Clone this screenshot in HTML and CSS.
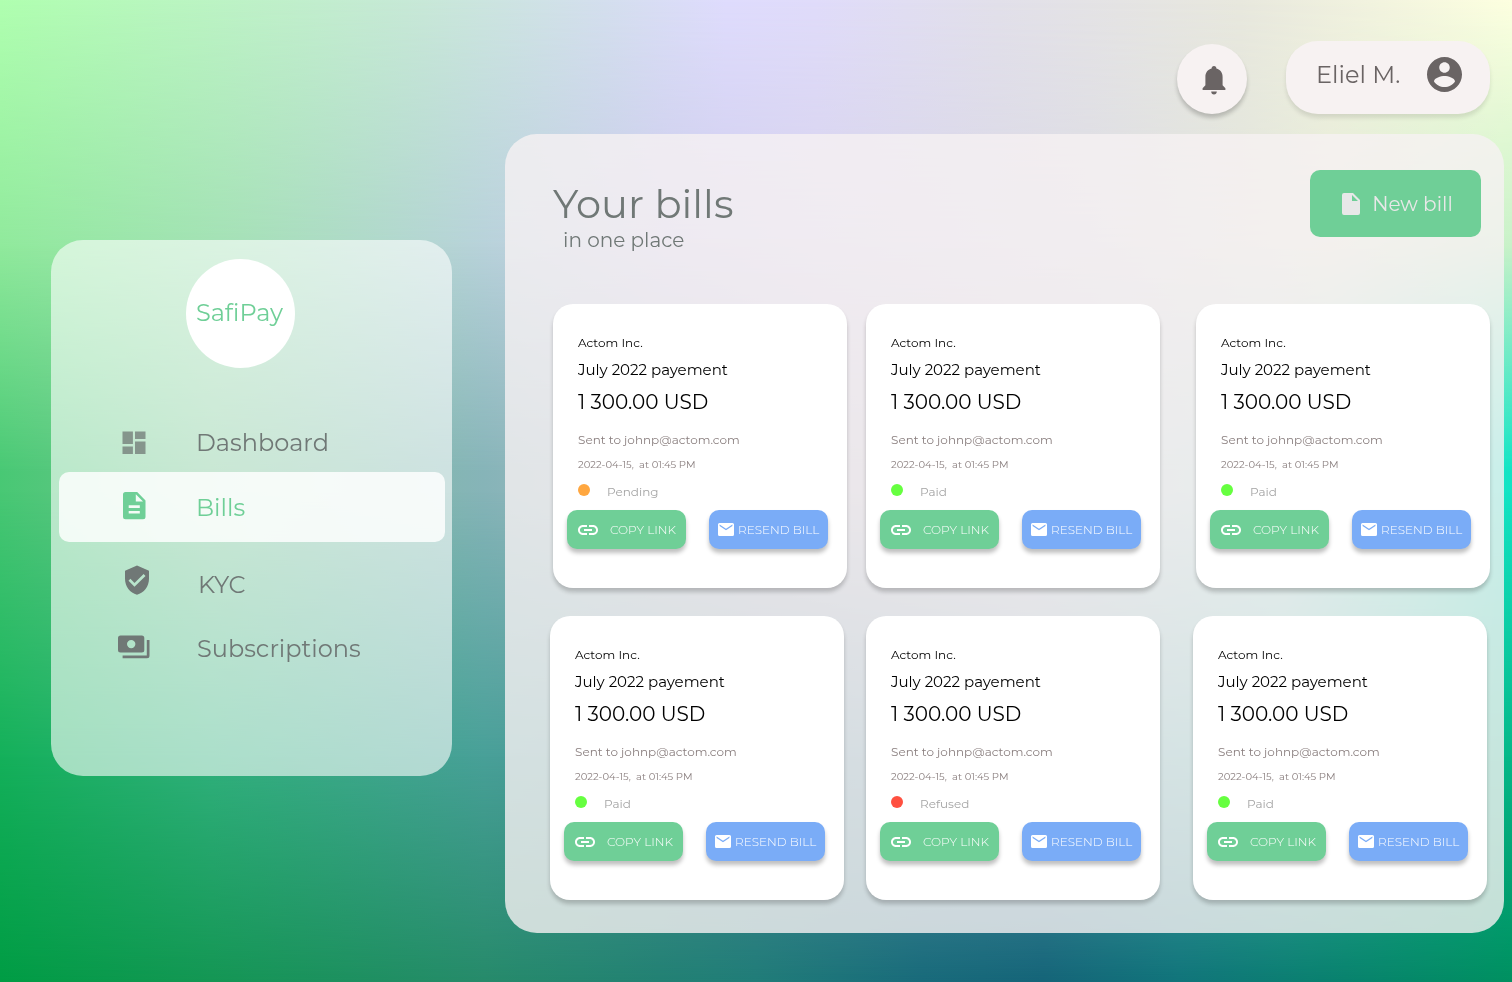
FILE: index.html
```html
<!DOCTYPE html>
<html lang="en">
<head>
<meta charset="utf-8">
<meta name="viewport" content="width=device-width, initial-scale=1">
<title>SafiPay – Bills</title>
<link rel="stylesheet" href="styles.css">
</head>
<body>
<div class="backdrop" aria-hidden="true">
  <div class="wash wash-1"></div>
  <div class="wash wash-2"></div>
  <div class="wash wash-3"></div>
  <div class="wash wash-4"></div>
  <div class="wash wash-5"></div>
</div>

<svg class="sprite" aria-hidden="true">
  <symbol id="i-link" viewBox="2 7 20 10"><path d="M3.9 12c0-1.71 1.39-3.1 3.1-3.1h4V7H7c-2.76 0-5 2.24-5 5s2.24 5 5 5h4v-1.900H7c-1.710 0-3.100-1.390-3.100-3.100zM8 13h8v-2H8v2zm9-6h-4v1.900h4c1.710 0 3.100 1.390 3.100 3.100s-1.390 3.100-3.100 3.100h-4V17h4c2.760 0 5-2.240 5-5s-2.240-5-5-5z"/></symbol>
  <symbol id="i-mail" viewBox="0 0 16 13"><path fill-rule="evenodd" d="M1.500 0h13A1.500 1.500 0 0 1 16 1.500v10a1.500 1.500 0 0 1-1.500 1.500h-13A1.500 1.500 0 0 1 0 11.500v-10A1.500 1.500 0 0 1 1.500 0zM1.600 1.600v1.500L8 7.200l6.400-4.100V1.600L8 5.700z"/></symbol>
</svg>

<div class="page">
  <aside class="sidebar">
    <div class="brand">SafiPay</div>
    <nav class="nav" aria-label="Main">
      <a class="nav-item faded" href="#dashboard">
        <svg class="nav-icon" viewBox="0 -1 32 32"><path d="M4.500 4.500h10.400v12.600H4.500zM17 4.500h10.500V12H17zM4.500 19.500h10.400V27H4.500zM17 14.500h10.500V27H17z"/></svg>
        <span>Dashboard</span>
      </a>
      <a class="nav-item active" href="#bills" aria-current="page">
        <svg class="nav-icon" viewBox="0 1 32 32"><path fill-rule="evenodd" d="M7.500 2h11.700l8.300 8.500v16.300a2.500 2.500 0 0 1-2.500 2.500H7.500A2.500 2.500 0 0 1 5 26.800V4.500A2.500 2.500 0 0 1 7.500 2zm10.300 2.200v7.300H25zM10.700 15.300v2.700h11.100v-2.700zm0 5.600v2.700h11.100v-2.700z"/></svg>
        <span>Bills</span>
      </a>
      <a class="nav-item" href="#kyc">
        <svg class="nav-icon shield" viewBox="0 5 32 32"><path fill-rule="evenodd" d="M19 1.500l12 5.300v8C31 22.500 26 29 19 30.700 12 29 7 22.500 7 14.800v-8zM16.500 22.700L27.500 12l-1.900-1.900-9.100 8.800-4.100-4.100-1.900 1.900z"/></svg>
        <span>KYC</span>
      </a>
      <a class="nav-item last" href="#subscriptions">
        <svg class="nav-icon" viewBox="0 1 32 32"><path fill-rule="evenodd" d="M2.500 4.500h21.300A2.500 2.500 0 0 1 26.300 7v12.100a2.500 2.500 0 0 1-2.500 2.500H2.500A2.500 2.500 0 0 1 0 19.100V7a2.500 2.500 0 0 1 2.500-2.500zm10.700 4.400a4.200 4.200 0 1 0 0 8.400 4.200 4.200 0 0 0 0-8.400z"/><path d="M28.800 9h2.700v15.700a2.500 2.500 0 0 1-2.500 2.500H4.600v-2.700h24.200z"/></svg>
        <span>Subscriptions</span>
      </a>
    </nav>
  </aside>

  <div class="content">
    <header class="topbar">
      <button class="bell" type="button" aria-label="Notifications">
        <svg class="bell-icon" viewBox="0 0 24 29"><path d="M12 0c1.500 0 2.400 1 2.400 2.500 4 1 6.200 4.200 6.200 8.400v8.300l2.800 3V24H.600v-1.800l2.800-3v-8.300c0-4.200 2.200-7.400 6.200-8.400C9.600 1 10.500 0 12 0zM9.200 25.500h5.600c0 1.700-1.200 3-2.800 3s-2.800-1.300-2.800-3z"/></svg>
      </button>
      <button class="account" type="button">
        <span>Eliel M.</span>
        <svg class="account-icon" viewBox="2 2 20 20"><path fill-rule="evenodd" d="M12 2C6.480 2 2 6.480 2 12s4.480 10 10 10 10-4.480 10-10S17.520 2 12 2zm0 3c1.660 0 3 1.340 3 3s-1.340 3-3 3-3-1.340-3-3 1.340-3 3-3zm0 14.200c-2.500 0-4.710-1.280-6-3.220.030-1.990 4-3.080 6-3.080 1.990 0 5.970 1.090 6 3.080-1.290 1.940-3.500 3.220-6 3.220z"/></svg>
      </button>
    </header>

    <main class="panel">
      <div class="panel-head">
        <div class="titles">
          <h1 class="title">Your bills</h1>
          <p class="subtitle">in one place</p>
        </div>
        <button class="new-bill" type="button">
          <svg class="new-icon" viewBox="0 0 18 22"><path fill-rule="evenodd" d="M2 0h9l7 7v13a2 2 0 0 1-2 2H2a2 2 0 0 1-2-2V2a2 2 0 0 1 2-2zm8 2v6h6z"/></svg>
          <span>New bill</span>
        </button>
      </div>

      <div class="bills">
        <div class="bill-row">
          <article class="bill">
            <p class="company">Actom Inc.</p>
            <h2 class="name">July 2022 payement</h2>
            <p class="amount">1 300.00 USD</p>
            <p class="sent">Sent to johnp@actom.com</p>
            <p class="date">2022-04-15,&nbsp; at 01:45 PM</p>
            <p class="status pending">Pending</p>
            <div class="actions">
              <button class="btn copy" type="button"><svg class="link-icon"><use href="#i-link"/></svg>COPY LINK</button>
              <button class="btn resend" type="button"><svg class="mail-icon"><use href="#i-mail"/></svg>RESEND BILL</button>
            </div>
          </article>
          <article class="bill">
            <p class="company">Actom Inc.</p>
            <h2 class="name">July 2022 payement</h2>
            <p class="amount">1 300.00 USD</p>
            <p class="sent">Sent to johnp@actom.com</p>
            <p class="date">2022-04-15,&nbsp; at 01:45 PM</p>
            <p class="status paid">Paid</p>
            <div class="actions">
              <button class="btn copy" type="button"><svg class="link-icon"><use href="#i-link"/></svg>COPY LINK</button>
              <button class="btn resend" type="button"><svg class="mail-icon"><use href="#i-mail"/></svg>RESEND BILL</button>
            </div>
          </article>
          <article class="bill">
            <p class="company">Actom Inc.</p>
            <h2 class="name">July 2022 payement</h2>
            <p class="amount">1 300.00 USD</p>
            <p class="sent">Sent to johnp@actom.com</p>
            <p class="date">2022-04-15,&nbsp; at 01:45 PM</p>
            <p class="status paid">Paid</p>
            <div class="actions">
              <button class="btn copy" type="button"><svg class="link-icon"><use href="#i-link"/></svg>COPY LINK</button>
              <button class="btn resend" type="button"><svg class="mail-icon"><use href="#i-mail"/></svg>RESEND BILL</button>
            </div>
          </article>
        </div>
        <div class="bill-row second">
          <article class="bill">
            <p class="company">Actom Inc.</p>
            <h2 class="name">July 2022 payement</h2>
            <p class="amount">1 300.00 USD</p>
            <p class="sent">Sent to johnp@actom.com</p>
            <p class="date">2022-04-15,&nbsp; at 01:45 PM</p>
            <p class="status paid">Paid</p>
            <div class="actions">
              <button class="btn copy" type="button"><svg class="link-icon"><use href="#i-link"/></svg>COPY LINK</button>
              <button class="btn resend" type="button"><svg class="mail-icon"><use href="#i-mail"/></svg>RESEND BILL</button>
            </div>
          </article>
          <article class="bill">
            <p class="company">Actom Inc.</p>
            <h2 class="name">July 2022 payement</h2>
            <p class="amount">1 300.00 USD</p>
            <p class="sent">Sent to johnp@actom.com</p>
            <p class="date">2022-04-15,&nbsp; at 01:45 PM</p>
            <p class="status refused">Refused</p>
            <div class="actions">
              <button class="btn copy" type="button"><svg class="link-icon"><use href="#i-link"/></svg>COPY LINK</button>
              <button class="btn resend" type="button"><svg class="mail-icon"><use href="#i-mail"/></svg>RESEND BILL</button>
            </div>
          </article>
          <article class="bill">
            <p class="company">Actom Inc.</p>
            <h2 class="name">July 2022 payement</h2>
            <p class="amount">1 300.00 USD</p>
            <p class="sent">Sent to johnp@actom.com</p>
            <p class="date">2022-04-15,&nbsp; at 01:45 PM</p>
            <p class="status paid">Paid</p>
            <div class="actions">
              <button class="btn copy" type="button"><svg class="link-icon"><use href="#i-link"/></svg>COPY LINK</button>
              <button class="btn resend" type="button"><svg class="mail-icon"><use href="#i-mail"/></svg>RESEND BILL</button>
            </div>
          </article>
        </div>
      </div>
    </main>
  </div>
</div>
</body>
</html>
```

FILE: styles.css
```css
* { box-sizing: border-box; }

body {
  margin: 0;
  font-family: Montserrat, Inter, "Liberation Sans", sans-serif;
  color: #000;
}

h1, h2, p { margin: 0; font-weight: 400; }
button { border: 0; padding: 0; font: inherit; cursor: pointer; }
a { text-decoration: none; }
svg { fill: currentColor; flex: none; display: block; }
.sprite { position: absolute; width: 0; height: 0; }

/* Colour mesh: horizontal gradients faded into one another from top to bottom */
.backdrop { position: fixed; inset: 0; z-index: -1; }
.wash { position: absolute; inset: 0; }
.wash-1 { background: linear-gradient(90deg, #b0ffb0, #c8e8d8 28%, #d4dfee 40%, #dfdcfd 48%, #e0dcfa 54%, #e2e0ea 66%, #e8e8de 82%, #fdffe0); }
.wash-2 {
  background: linear-gradient(90deg, #90ea9c, #a6e0b8 16%, #b8d2da 32%, #ccccec 44%, #d6d2ec 54%, #dcdce4 72%, #e6ecd8 88%, #c8f2c8);
  mask-image: linear-gradient(transparent, #000 25%);
}
.wash-3 {
  background: linear-gradient(90deg, #48c874, #78c494 14%, #86b4b8 32%, #b4b8c8 50%, #ccc8d0 68%, #a8dcd4 85%, #10e4c4);
  mask-image: linear-gradient(transparent 25%, #000 48%);
}
.wash-4 {
  background: linear-gradient(90deg, #14b05a, #30b07c 14%, #48a098 32%, #508898 50%, #5c98a8 68%, #48b8a8 85%, #04b888);
  mask-image: linear-gradient(transparent 50%, #000 77%);
}
.wash-5 {
  background: linear-gradient(90deg, #009c44, #149654 14%, #268a6a 32%, #207c78 50%, #186a7a 61%, #146478 69%, #10747a 78%, #009060);
  mask-image: linear-gradient(transparent 77%, #000 100%);
}

.page {
  display: grid;
  grid-template-columns: 401px 1fr;
  gap: 53px;
  padding: 41px 8px 49px 51px;
}

/* Sidebar */
.sidebar {
  align-self: start;
  margin-top: 199px;
  padding: 19px 7px 97px 8px;
  border-radius: 32px;
  background: rgba(255, 255, 255, .6);
}
.brand {
  display: flex;
  align-items: center;
  justify-content: center;
  width: 109px;
  height: 109px;
  margin: 0 auto 44px 127px;
  padding: 0 2px 2px 0;
  border-radius: 50%;
  background: #fff;
  color: #6fcf97;
  font-size: 24px;
}
.nav { display: flex; flex-direction: column; }
.nav-item {
  display: flex;
  align-items: center;
  gap: 46px;
  height: 60px;
  padding-left: 59px;
  border-radius: 10px;
  color: #707876;
  font-size: 24px;
}
.nav-item.active {
  height: 70px;
  background: rgba(255, 255, 255, .82);
  color: #6fcf97;
}
.nav-item.active + .nav-item { gap: 48px; height: 75px; padding-top: 10px; }
.nav-item.last { gap: 47px; height: 62px; }
.nav-icon { width: 32px; height: 32px; overflow: visible; }
.faded .nav-icon { opacity: .75; }

/* Top bar */
.topbar {
  display: flex;
  justify-content: flex-end;
  align-items: center;
  gap: 39px;
  padding-right: 14px;
  margin-bottom: 20px;
  color: #6a6464;
}
.bell, .account {
  display: flex;
  align-items: center;
  background: #f7f2f2;
  color: inherit;
  box-shadow: 0 4px 4px rgba(0, 0, 0, .2);
}
.bell {
  justify-content: center;
  width: 70px;
  height: 70px;
  margin-top: 2px;
  padding: 3px 0 0 3px;
  border-radius: 50%;
}
.bell-icon { width: 24px; height: 29px; }
.account {
  justify-content: space-between;
  width: 204px;
  height: 73px;
  padding: 0 28px 6px 30px;
  border-radius: 32px;
  font-size: 24px;
  box-shadow: 0 4px 4px rgba(0, 0, 0, .1);
}
.account-icon { width: 35px; height: 35px; }

/* Bills panel */
.panel {
  padding: 36px 14px 33px 45px;
  border-radius: 32px;
  background: rgba(246, 241, 242, .8);
}
.panel-head {
  display: flex;
  justify-content: space-between;
  align-items: flex-start;
  padding: 0 9px 0 3px;
  height: 134px;
  color: #707876;
}
.titles { padding-top: 10px; }
.title { font-size: 40px; line-height: 48px; }
.subtitle { padding-left: 10px; font-size: 20px; line-height: 24px; }
.new-bill {
  display: flex;
  align-items: center;
  justify-content: center;
  gap: 12px;
  width: 171px;
  height: 67px;
  padding-left: 4px;
  border-radius: 10px;
  background: #6fcf97;
  color: #e8e8e8;
  font-size: 20px;
}
.new-icon { width: 18px; height: 22px; }

.bills { display: grid; gap: 28px; }
.bill-row {
  display: grid;
  grid-template-columns: 313px 1fr 294px;
  padding-left: 3px;
}
.bill-row.second { grid-template-columns: 316px 1fr 294px; padding: 0 3px 0 0; }

.bill {
  width: 294px;
  padding: 31px 19px 39px 14px;
  border-radius: 20px;
  background: #fff;
  box-shadow: 0 4px 4px rgba(0, 0, 0, .2);
}
.bill p, .bill h2 { padding-left: 11px; }
.company { font-size: 12px; line-height: 16px; }
.bill .name { margin-top: 9px; font-size: 15px; line-height: 20px; }
.bill .amount { margin-top: 10px; font-size: 20px; line-height: 24px; }
.bill .sent { margin-top: 18px; color: #8a7f7f; font-size: 12px; line-height: 16px; }
.bill .date { margin-top: 11px; color: #8a7f7f; font-size: 10px; line-height: 12px; }
.bill .status {
  display: flex;
  align-items: flex-start;
  gap: 17px;
  margin-top: 13px;
  color: #a4a4a4;
  font-size: 12px;
  line-height: 16px;
}
.status::before { content: ""; width: 12px; height: 12px; border-radius: 50%; background: currentColor; }
.paid::before { background: #66ff40; }
.pending::before { background: #ffa740; }
.refused::before { background: #ff5040; }

.actions { display: flex; justify-content: space-between; margin-top: 10px; }
.btn {
  display: flex;
  align-items: center;
  width: 119px;
  height: 39px;
  border-radius: 10px;
  color: #fff;
  font-size: 12px;
  font-weight: 300;
  box-shadow: 0 4px 4px rgba(0, 0, 0, .25);
}
.copy { gap: 12px; padding-left: 11px; background: #6fcf97; }
.resend { gap: 4px; padding-left: 9px; background: #7aacf7; }
.link-icon { width: 20px; height: 10px; }
.mail-icon { width: 16px; height: 13px; }
```
